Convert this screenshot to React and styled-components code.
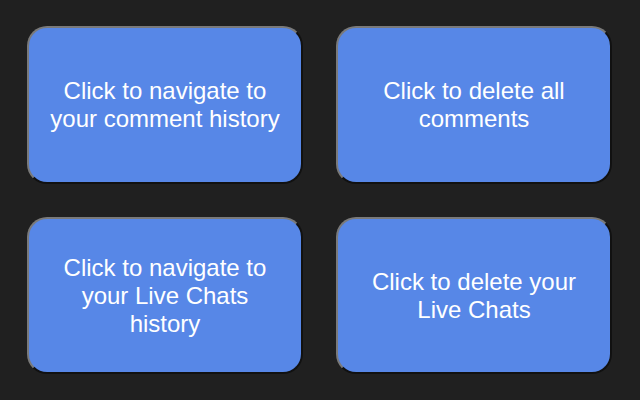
import React from "react";
import styled, { createGlobalStyle } from "styled-components";

const Global = createGlobalStyle`
  html, body {
    margin: 0;
    padding: 0;
    background: #202020;
  }
  body {
    width: 640px;
    height: 400px;
    overflow: hidden;
    font-family: "Liberation Sans", Arial, sans-serif;
  }
`;

const Grid = styled.div`
  display: grid;
  grid-template-columns: 276px 276px;
  grid-template-rows: 158px 157px;
  column-gap: 33px;
  row-gap: 33px;
  padding: 26px 28px 26px 27px;
`;

const ActionButton = styled.button`
  display: flex;
  align-items: center;
  justify-content: center;
  box-sizing: border-box;
  width: 100%;
  height: 100%;
  padding: 0 16px;
  margin: 0;
  background: #5787e7;
  color: #ffffff;
  font-family: "Liberation Sans", Arial, sans-serif;
  font-size: 24px;
  line-height: normal;
  text-align: center;
  border-style: solid;
  border-width: 2px;
  border-color: #7a7a7a #111111 #111111 #7a7a7a;
  border-radius: 20px;
  cursor: pointer;
`;

const actions = [
  "Click to navigate to your comment history",
  "Click to delete all comments",
  "Click to navigate to your Live Chats history",
  "Click to delete your Live Chats",
];

export default function App() {
  return (
    <>
      <Global />
      <Grid>
        {actions.map((label) => (
          <ActionButton key={label}>{label}</ActionButton>
        ))}
      </Grid>
    </>
  );
}
